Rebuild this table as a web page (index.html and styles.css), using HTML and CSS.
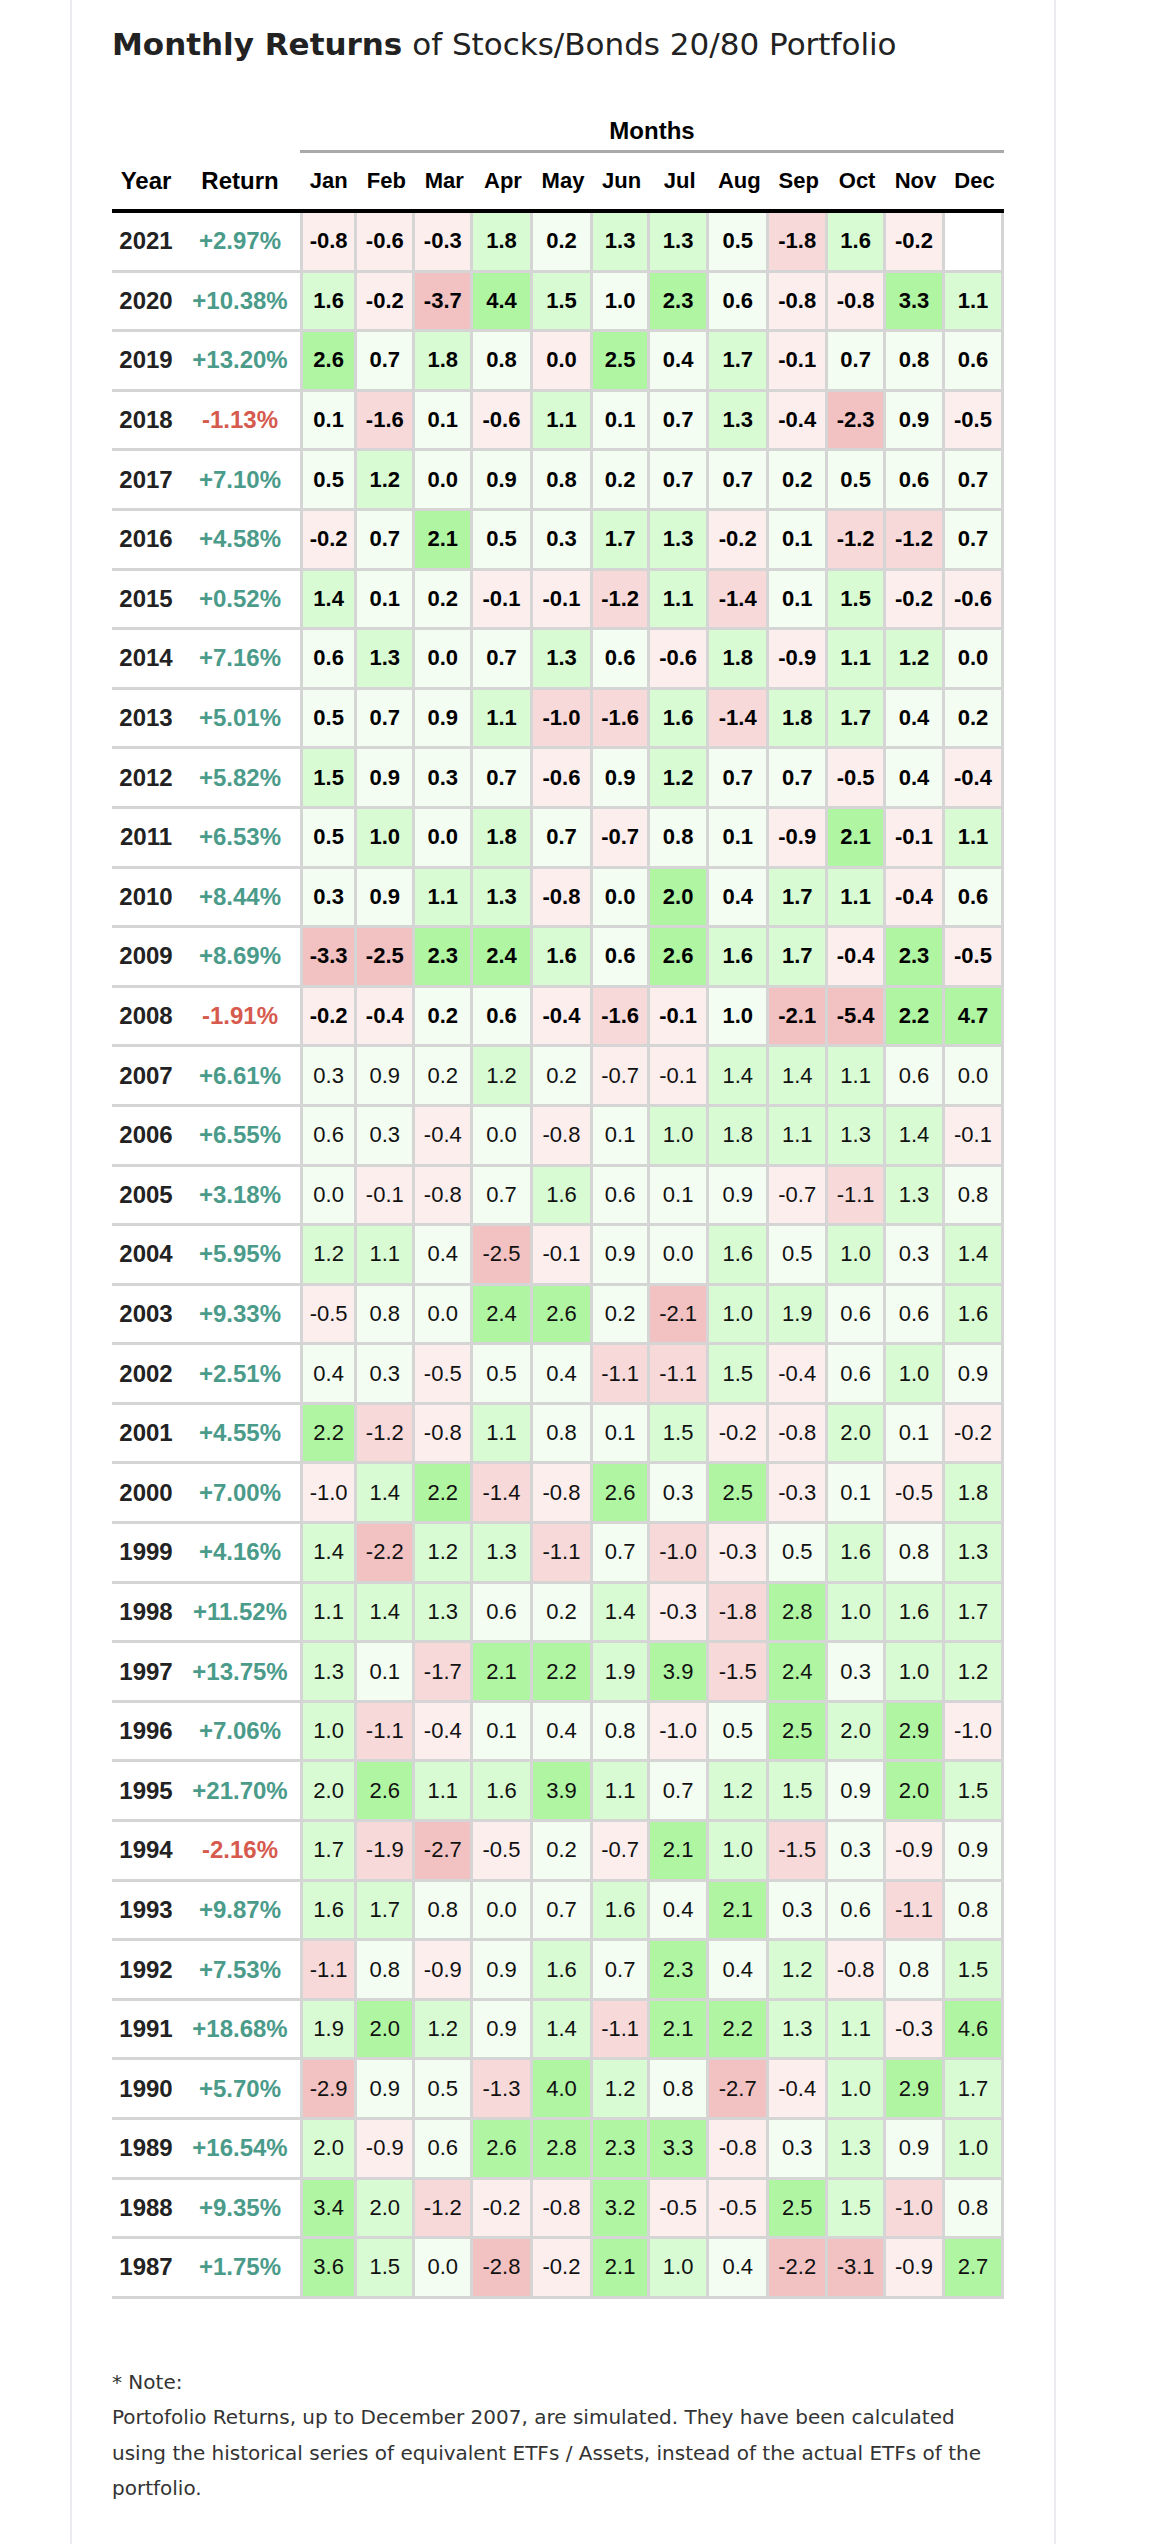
FILE: index.html
```html
<!DOCTYPE html>
<html lang="en">
<head>
<meta charset="utf-8">
<title>Monthly Returns of Stocks/Bonds 20/80 Portfolio</title>
<link rel="stylesheet" href="styles.css">
</head>
<body>
<main class="page">
  <h2 class="title"><strong>Monthly Returns</strong> of Stocks/Bonds 20/80 Portfolio</h2>
  <table class="returns">
    <colgroup>
      <col class="c-year"><col class="c-ret">
      <col class="c-jan"><col class="c-feb"><col class="c-mar"><col class="c-apr"><col class="c-may"><col class="c-jun">
      <col class="c-jul"><col class="c-aug"><col class="c-sep"><col class="c-oct"><col class="c-nov"><col class="c-dec">
    </colgroup>
    <thead>
      <tr class="group-row"><th colspan="2"></th><th colspan="12" class="months">Months</th></tr>
      <tr class="head-row"><th class="big">Year</th><th class="big">Return</th><th>Jan</th><th>Feb</th><th>Mar</th><th>Apr</th><th>May</th><th>Jun</th><th>Jul</th><th>Aug</th><th>Sep</th><th>Oct</th><th>Nov</th><th>Dec</th></tr>
    </thead>
    <tbody>
      <tr class="b"><td class="yr">2021</td><td class="ret pos">+2.97%</td><td class="m jan r1">-0.8</td><td class="m r1">-0.6</td><td class="m r1">-0.3</td><td class="m g2">1.8</td><td class="m g1">0.2</td><td class="m g2">1.3</td><td class="m g2">1.3</td><td class="m g1">0.5</td><td class="m r2">-1.8</td><td class="m g2">1.6</td><td class="m r1">-0.2</td><td class="m"></td></tr>
      <tr class="b"><td class="yr">2020</td><td class="ret pos">+10.38%</td><td class="m jan g2">1.6</td><td class="m r1">-0.2</td><td class="m r3">-3.7</td><td class="m g3">4.4</td><td class="m g2">1.5</td><td class="m g1">1.0</td><td class="m g3">2.3</td><td class="m g1">0.6</td><td class="m r1">-0.8</td><td class="m r1">-0.8</td><td class="m g3">3.3</td><td class="m g2">1.1</td></tr>
      <tr class="b"><td class="yr">2019</td><td class="ret pos">+13.20%</td><td class="m jan g3">2.6</td><td class="m g1">0.7</td><td class="m g2">1.8</td><td class="m g1">0.8</td><td class="m r1">0.0</td><td class="m g3">2.5</td><td class="m g1">0.4</td><td class="m g2">1.7</td><td class="m r1">-0.1</td><td class="m g1">0.7</td><td class="m g1">0.8</td><td class="m g1">0.6</td></tr>
      <tr class="b"><td class="yr">2018</td><td class="ret neg">-1.13%</td><td class="m jan g1">0.1</td><td class="m r2">-1.6</td><td class="m g1">0.1</td><td class="m r1">-0.6</td><td class="m g2">1.1</td><td class="m g1">0.1</td><td class="m g1">0.7</td><td class="m g2">1.3</td><td class="m r1">-0.4</td><td class="m r3">-2.3</td><td class="m g1">0.9</td><td class="m r1">-0.5</td></tr>
      <tr class="b"><td class="yr">2017</td><td class="ret pos">+7.10%</td><td class="m jan g1">0.5</td><td class="m g2">1.2</td><td class="m g1">0.0</td><td class="m g1">0.9</td><td class="m g1">0.8</td><td class="m g1">0.2</td><td class="m g1">0.7</td><td class="m g1">0.7</td><td class="m g1">0.2</td><td class="m g1">0.5</td><td class="m g1">0.6</td><td class="m g1">0.7</td></tr>
      <tr class="b"><td class="yr">2016</td><td class="ret pos">+4.58%</td><td class="m jan r1">-0.2</td><td class="m g1">0.7</td><td class="m g3">2.1</td><td class="m g1">0.5</td><td class="m g1">0.3</td><td class="m g2">1.7</td><td class="m g2">1.3</td><td class="m r1">-0.2</td><td class="m g1">0.1</td><td class="m r2">-1.2</td><td class="m r2">-1.2</td><td class="m g1">0.7</td></tr>
      <tr class="b"><td class="yr">2015</td><td class="ret pos">+0.52%</td><td class="m jan g2">1.4</td><td class="m g1">0.1</td><td class="m g1">0.2</td><td class="m r1">-0.1</td><td class="m r1">-0.1</td><td class="m r2">-1.2</td><td class="m g2">1.1</td><td class="m r2">-1.4</td><td class="m g1">0.1</td><td class="m g2">1.5</td><td class="m r1">-0.2</td><td class="m r1">-0.6</td></tr>
      <tr class="b"><td class="yr">2014</td><td class="ret pos">+7.16%</td><td class="m jan g1">0.6</td><td class="m g2">1.3</td><td class="m g1">0.0</td><td class="m g1">0.7</td><td class="m g2">1.3</td><td class="m g1">0.6</td><td class="m r1">-0.6</td><td class="m g2">1.8</td><td class="m r1">-0.9</td><td class="m g2">1.1</td><td class="m g2">1.2</td><td class="m g1">0.0</td></tr>
      <tr class="b"><td class="yr">2013</td><td class="ret pos">+5.01%</td><td class="m jan g1">0.5</td><td class="m g1">0.7</td><td class="m g1">0.9</td><td class="m g2">1.1</td><td class="m r2">-1.0</td><td class="m r2">-1.6</td><td class="m g2">1.6</td><td class="m r2">-1.4</td><td class="m g2">1.8</td><td class="m g2">1.7</td><td class="m g1">0.4</td><td class="m g1">0.2</td></tr>
      <tr class="b"><td class="yr">2012</td><td class="ret pos">+5.82%</td><td class="m jan g2">1.5</td><td class="m g1">0.9</td><td class="m g1">0.3</td><td class="m g1">0.7</td><td class="m r1">-0.6</td><td class="m g1">0.9</td><td class="m g2">1.2</td><td class="m g1">0.7</td><td class="m g1">0.7</td><td class="m r1">-0.5</td><td class="m g1">0.4</td><td class="m r1">-0.4</td></tr>
      <tr class="b"><td class="yr">2011</td><td class="ret pos">+6.53%</td><td class="m jan g1">0.5</td><td class="m g2">1.0</td><td class="m g1">0.0</td><td class="m g2">1.8</td><td class="m g1">0.7</td><td class="m r1">-0.7</td><td class="m g1">0.8</td><td class="m g1">0.1</td><td class="m r1">-0.9</td><td class="m g3">2.1</td><td class="m r1">-0.1</td><td class="m g2">1.1</td></tr>
      <tr class="b"><td class="yr">2010</td><td class="ret pos">+8.44%</td><td class="m jan g1">0.3</td><td class="m g1">0.9</td><td class="m g2">1.1</td><td class="m g2">1.3</td><td class="m r1">-0.8</td><td class="m g1">0.0</td><td class="m g3">2.0</td><td class="m g1">0.4</td><td class="m g2">1.7</td><td class="m g2">1.1</td><td class="m r1">-0.4</td><td class="m g1">0.6</td></tr>
      <tr class="b"><td class="yr">2009</td><td class="ret pos">+8.69%</td><td class="m jan r3">-3.3</td><td class="m r3">-2.5</td><td class="m g3">2.3</td><td class="m g3">2.4</td><td class="m g2">1.6</td><td class="m g1">0.6</td><td class="m g3">2.6</td><td class="m g2">1.6</td><td class="m g2">1.7</td><td class="m r1">-0.4</td><td class="m g3">2.3</td><td class="m r1">-0.5</td></tr>
      <tr class="b"><td class="yr">2008</td><td class="ret neg">-1.91%</td><td class="m jan r1">-0.2</td><td class="m r1">-0.4</td><td class="m g1">0.2</td><td class="m g1">0.6</td><td class="m r1">-0.4</td><td class="m r2">-1.6</td><td class="m r1">-0.1</td><td class="m g1">1.0</td><td class="m r3">-2.1</td><td class="m r3">-5.4</td><td class="m g3">2.2</td><td class="m g3">4.7</td></tr>
      <tr><td class="yr">2007</td><td class="ret pos">+6.61%</td><td class="m jan g1">0.3</td><td class="m g1">0.9</td><td class="m g1">0.2</td><td class="m g2">1.2</td><td class="m g1">0.2</td><td class="m r1">-0.7</td><td class="m r1">-0.1</td><td class="m g2">1.4</td><td class="m g2">1.4</td><td class="m g2">1.1</td><td class="m g1">0.6</td><td class="m g1">0.0</td></tr>
      <tr><td class="yr">2006</td><td class="ret pos">+6.55%</td><td class="m jan g1">0.6</td><td class="m g1">0.3</td><td class="m r1">-0.4</td><td class="m g1">0.0</td><td class="m r1">-0.8</td><td class="m g1">0.1</td><td class="m g2">1.0</td><td class="m g2">1.8</td><td class="m g2">1.1</td><td class="m g2">1.3</td><td class="m g2">1.4</td><td class="m r1">-0.1</td></tr>
      <tr><td class="yr">2005</td><td class="ret pos">+3.18%</td><td class="m jan g1">0.0</td><td class="m r1">-0.1</td><td class="m r1">-0.8</td><td class="m g1">0.7</td><td class="m g2">1.6</td><td class="m g1">0.6</td><td class="m g1">0.1</td><td class="m g1">0.9</td><td class="m r1">-0.7</td><td class="m r2">-1.1</td><td class="m g2">1.3</td><td class="m g1">0.8</td></tr>
      <tr><td class="yr">2004</td><td class="ret pos">+5.95%</td><td class="m jan g2">1.2</td><td class="m g2">1.1</td><td class="m g1">0.4</td><td class="m r3">-2.5</td><td class="m r1">-0.1</td><td class="m g1">0.9</td><td class="m g1">0.0</td><td class="m g2">1.6</td><td class="m g1">0.5</td><td class="m g2">1.0</td><td class="m g1">0.3</td><td class="m g2">1.4</td></tr>
      <tr><td class="yr">2003</td><td class="ret pos">+9.33%</td><td class="m jan r1">-0.5</td><td class="m g1">0.8</td><td class="m g1">0.0</td><td class="m g3">2.4</td><td class="m g3">2.6</td><td class="m g1">0.2</td><td class="m r3">-2.1</td><td class="m g2">1.0</td><td class="m g2">1.9</td><td class="m g1">0.6</td><td class="m g1">0.6</td><td class="m g2">1.6</td></tr>
      <tr><td class="yr">2002</td><td class="ret pos">+2.51%</td><td class="m jan g1">0.4</td><td class="m g1">0.3</td><td class="m r1">-0.5</td><td class="m g1">0.5</td><td class="m g1">0.4</td><td class="m r2">-1.1</td><td class="m r2">-1.1</td><td class="m g2">1.5</td><td class="m r1">-0.4</td><td class="m g1">0.6</td><td class="m g2">1.0</td><td class="m g1">0.9</td></tr>
      <tr><td class="yr">2001</td><td class="ret pos">+4.55%</td><td class="m jan g3">2.2</td><td class="m r2">-1.2</td><td class="m r1">-0.8</td><td class="m g2">1.1</td><td class="m g1">0.8</td><td class="m g1">0.1</td><td class="m g2">1.5</td><td class="m r1">-0.2</td><td class="m r1">-0.8</td><td class="m g2">2.0</td><td class="m g1">0.1</td><td class="m r1">-0.2</td></tr>
      <tr><td class="yr">2000</td><td class="ret pos">+7.00%</td><td class="m jan r1">-1.0</td><td class="m g2">1.4</td><td class="m g3">2.2</td><td class="m r2">-1.4</td><td class="m r1">-0.8</td><td class="m g3">2.6</td><td class="m g1">0.3</td><td class="m g3">2.5</td><td class="m r1">-0.3</td><td class="m g1">0.1</td><td class="m r1">-0.5</td><td class="m g2">1.8</td></tr>
      <tr><td class="yr">1999</td><td class="ret pos">+4.16%</td><td class="m jan g2">1.4</td><td class="m r3">-2.2</td><td class="m g2">1.2</td><td class="m g2">1.3</td><td class="m r2">-1.1</td><td class="m g1">0.7</td><td class="m r2">-1.0</td><td class="m r1">-0.3</td><td class="m g1">0.5</td><td class="m g2">1.6</td><td class="m g1">0.8</td><td class="m g2">1.3</td></tr>
      <tr><td class="yr">1998</td><td class="ret pos">+11.52%</td><td class="m jan g2">1.1</td><td class="m g2">1.4</td><td class="m g2">1.3</td><td class="m g1">0.6</td><td class="m g1">0.2</td><td class="m g2">1.4</td><td class="m r1">-0.3</td><td class="m r2">-1.8</td><td class="m g3">2.8</td><td class="m g2">1.0</td><td class="m g2">1.6</td><td class="m g2">1.7</td></tr>
      <tr><td class="yr">1997</td><td class="ret pos">+13.75%</td><td class="m jan g2">1.3</td><td class="m g1">0.1</td><td class="m r2">-1.7</td><td class="m g3">2.1</td><td class="m g3">2.2</td><td class="m g2">1.9</td><td class="m g3">3.9</td><td class="m r2">-1.5</td><td class="m g3">2.4</td><td class="m g1">0.3</td><td class="m g2">1.0</td><td class="m g2">1.2</td></tr>
      <tr><td class="yr">1996</td><td class="ret pos">+7.06%</td><td class="m jan g2">1.0</td><td class="m r2">-1.1</td><td class="m r1">-0.4</td><td class="m g1">0.1</td><td class="m g1">0.4</td><td class="m g1">0.8</td><td class="m r1">-1.0</td><td class="m g1">0.5</td><td class="m g3">2.5</td><td class="m g2">2.0</td><td class="m g3">2.9</td><td class="m r1">-1.0</td></tr>
      <tr><td class="yr">1995</td><td class="ret pos">+21.70%</td><td class="m jan g2">2.0</td><td class="m g3">2.6</td><td class="m g2">1.1</td><td class="m g2">1.6</td><td class="m g3">3.9</td><td class="m g2">1.1</td><td class="m g1">0.7</td><td class="m g2">1.2</td><td class="m g2">1.5</td><td class="m g1">0.9</td><td class="m g3">2.0</td><td class="m g2">1.5</td></tr>
      <tr><td class="yr">1994</td><td class="ret neg">-2.16%</td><td class="m jan g2">1.7</td><td class="m r2">-1.9</td><td class="m r3">-2.7</td><td class="m r1">-0.5</td><td class="m g1">0.2</td><td class="m r1">-0.7</td><td class="m g3">2.1</td><td class="m g2">1.0</td><td class="m r2">-1.5</td><td class="m g1">0.3</td><td class="m r1">-0.9</td><td class="m g1">0.9</td></tr>
      <tr><td class="yr">1993</td><td class="ret pos">+9.87%</td><td class="m jan g2">1.6</td><td class="m g2">1.7</td><td class="m g1">0.8</td><td class="m g1">0.0</td><td class="m g1">0.7</td><td class="m g2">1.6</td><td class="m g1">0.4</td><td class="m g3">2.1</td><td class="m g1">0.3</td><td class="m g1">0.6</td><td class="m r2">-1.1</td><td class="m g1">0.8</td></tr>
      <tr><td class="yr">1992</td><td class="ret pos">+7.53%</td><td class="m jan r2">-1.1</td><td class="m g1">0.8</td><td class="m r1">-0.9</td><td class="m g1">0.9</td><td class="m g2">1.6</td><td class="m g1">0.7</td><td class="m g3">2.3</td><td class="m g1">0.4</td><td class="m g2">1.2</td><td class="m r1">-0.8</td><td class="m g1">0.8</td><td class="m g2">1.5</td></tr>
      <tr><td class="yr">1991</td><td class="ret pos">+18.68%</td><td class="m jan g2">1.9</td><td class="m g3">2.0</td><td class="m g2">1.2</td><td class="m g1">0.9</td><td class="m g2">1.4</td><td class="m r2">-1.1</td><td class="m g3">2.1</td><td class="m g3">2.2</td><td class="m g2">1.3</td><td class="m g2">1.1</td><td class="m r1">-0.3</td><td class="m g3">4.6</td></tr>
      <tr><td class="yr">1990</td><td class="ret pos">+5.70%</td><td class="m jan r3">-2.9</td><td class="m g1">0.9</td><td class="m g1">0.5</td><td class="m r2">-1.3</td><td class="m g3">4.0</td><td class="m g2">1.2</td><td class="m g1">0.8</td><td class="m r3">-2.7</td><td class="m r1">-0.4</td><td class="m g2">1.0</td><td class="m g3">2.9</td><td class="m g2">1.7</td></tr>
      <tr><td class="yr">1989</td><td class="ret pos">+16.54%</td><td class="m jan g2">2.0</td><td class="m r1">-0.9</td><td class="m g1">0.6</td><td class="m g3">2.6</td><td class="m g3">2.8</td><td class="m g3">2.3</td><td class="m g3">3.3</td><td class="m r1">-0.8</td><td class="m g1">0.3</td><td class="m g2">1.3</td><td class="m g1">0.9</td><td class="m g2">1.0</td></tr>
      <tr><td class="yr">1988</td><td class="ret pos">+9.35%</td><td class="m jan g3">3.4</td><td class="m g2">2.0</td><td class="m r2">-1.2</td><td class="m r1">-0.2</td><td class="m r1">-0.8</td><td class="m g3">3.2</td><td class="m r1">-0.5</td><td class="m r1">-0.5</td><td class="m g3">2.5</td><td class="m g2">1.5</td><td class="m r2">-1.0</td><td class="m g1">0.8</td></tr>
      <tr><td class="yr">1987</td><td class="ret pos">+1.75%</td><td class="m jan g3">3.6</td><td class="m g2">1.5</td><td class="m g1">0.0</td><td class="m r3">-2.8</td><td class="m r1">-0.2</td><td class="m g3">2.1</td><td class="m g2">1.0</td><td class="m g1">0.4</td><td class="m r3">-2.2</td><td class="m r3">-3.1</td><td class="m r1">-0.9</td><td class="m g3">2.7</td></tr>
    </tbody>
  </table>
  <div class="note">
    <div>* Note:</div>
    <p>Portofolio Returns, up to December 2007, are simulated. They have been calculated using the historical series of equivalent ETFs / Assets, instead of the actual ETFs of the portfolio.</p>
  </div>
</main>
</body>
</html>
```

FILE: styles.css
```css
* {
  box-sizing: border-box;
}

body {
  margin: 0;
  background: #ffffff;
}

.page {
  margin-left: 70px;
  width: 986px;
  min-height: 2544px;
  border-left: 2px solid #ebebef;
  border-right: 2px solid #ebebef;
  padding: 24px 40px 0;
}

.title {
  margin: 0;
  font-family: "DejaVu Sans", Verdana, sans-serif;
  font-size: 31px;
  line-height: 40px;
  font-weight: normal;
  color: #222222;
}

.title strong {
  font-weight: bold;
}

.returns {
  margin-top: 53px;
  width: 892px;
  table-layout: fixed;
  border-collapse: separate;
  border-spacing: 0;
  font-family: "Liberation Sans", Arial, sans-serif;
  color: #000000;
  text-align: center;
}

.c-year { width: 68px; }
.c-ret { width: 120px; }
.c-jan { width: 57.3px; }
.c-feb { width: 58px; }
.c-mar { width: 58px; }
.c-apr { width: 59.4px; }
.c-may { width: 60.6px; }
.c-jun { width: 56.7px; }
.c-jul { width: 59.3px; }
.c-aug { width: 60px; }
.c-sep { width: 59px; }
.c-oct { width: 57.7px; }
.c-nov { width: 59px; }
.c-dec { width: 59px; }

.returns th {
  padding: 0;
  font-weight: bold;
  color: #000000;
}

.group-row th {
  font-size: 24px;
  line-height: 28px;
  padding-bottom: 5px;
}

.group-row .months {
  border-bottom: 3px solid #a9a9a9;
}

.head-row th {
  font-size: 22px;
  line-height: 28px;
  padding: 14px 0;
  border-bottom: 4px solid #000000;
}

.head-row th.big {
  font-size: 24px;
}

.returns tbody tr {
  height: 59.6px;
}

.returns td {
  padding: 0;
  vertical-align: middle;
  border-bottom: 3px solid #d5d5d5;
  line-height: 28px;
}

.returns .yr {
  font-size: 24px;
  font-weight: bold;
  color: #222222;
}

.returns .ret {
  font-size: 24px;
  font-weight: bold;
}

.ret.pos { color: #4b9b8a; }
.ret.neg { color: #d65a4d; }

.returns .m {
  font-size: 22px;
  color: #111111;
  border-right: 3px solid #d5d5d5;
}

.returns .jan {
  border-left: 3px solid #d5d5d5;
}

.returns tr.b .m {
  font-weight: bold;
  color: #000000;
}

.g3 { background: #b0f6a2; }
.g2 { background: #d8fbd3; }
.g1 { background: #f3fdf1; }
.r1 { background: #fdeeee; }
.r2 { background: #f7d9d9; }
.r3 { background: #f2c1c1; }

.note {
  margin-top: 66px;
  font-family: "DejaVu Sans", Verdana, sans-serif;
  font-size: 20px;
  line-height: 35.5px;
  color: #333333;
}

.note p {
  margin: 0;
}
```
